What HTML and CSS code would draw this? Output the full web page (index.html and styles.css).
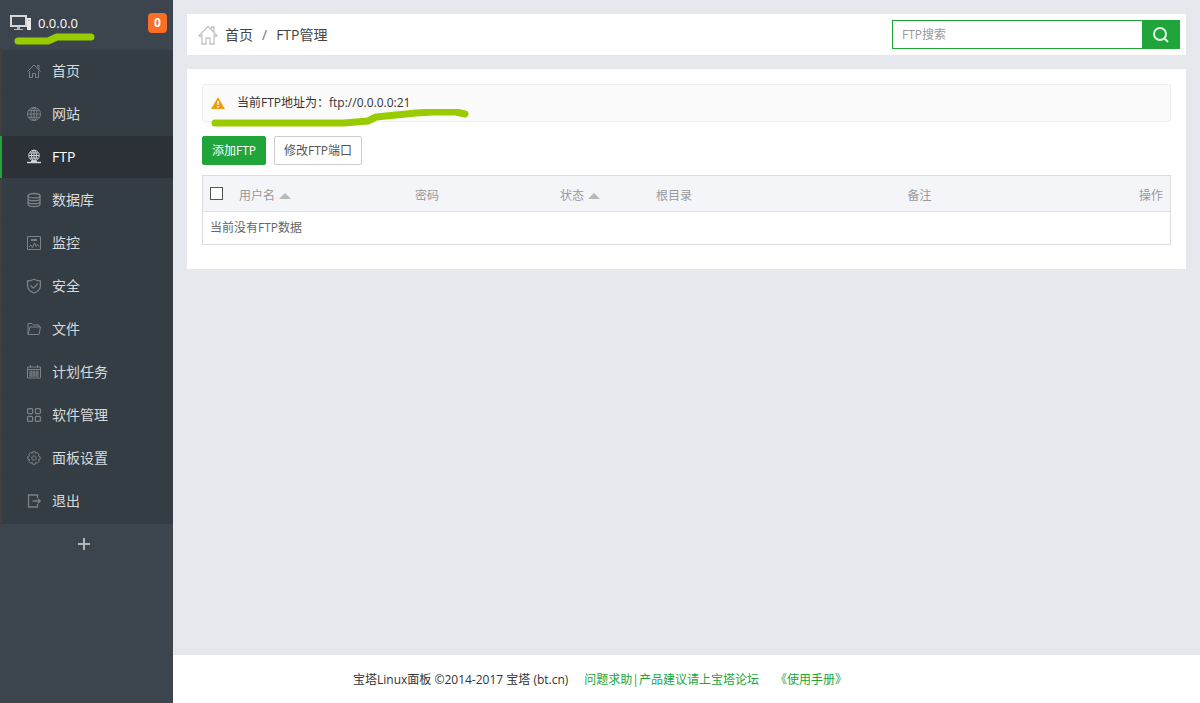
FILE: index.html
```
<!DOCTYPE html>
<html lang="zh-CN">
<head>
    <meta charset="UTF-8">
    <meta name="viewport" content="width=device-width, initial-scale=1.0">
    <title>FTP管理 - 宝塔Linux面板</title>
    <link rel="stylesheet" href="styles.css">
</head>
<body>
    <aside class="sidebar">
        <div class="server">
            <svg class="server-icon" width="22" height="16" viewBox="0 0 22 16">
                <path d="M1 1h15v10H1z" fill="none" stroke="#d4d6d8" stroke-width="2"/>
                <path d="M7 12h3v2h3v1H4v-1h3z" fill="#b4b7ba"/>
                <path d="M17 3h4v12h-4z" fill="#e8e9ea"/>
                <path d="M18 5h2v1h-2z" fill="#a0a4a8"/>
            </svg>
            <span class="server-ip">0.0.0.0</span>
            <span class="badge">0</span>
            <svg class="marker marker-ip" width="82" height="14" viewBox="0 0 82 14">
                <path d="M4 10H34L43 6H77"/>
            </svg>
        </div>
        <nav>
            <ul class="menu">
                <li><a href="#">
                    <svg viewBox="0 0 14 14"><path d="M.5 7.5 7 1l6.500 6.500M10.500 3V1.500h1.500v4M2.500 7v6.500h3v-4h3v4h3V7"/></svg>首页</a></li>
                <li><a href="#">
                    <svg viewBox="0 0 14 14"><circle cx="7" cy="7" r="6.500"/><ellipse cx="7" cy="7" rx="3" ry="6.500"/><path d="M7 .5v13M.5 7h13M1.500 3.700h11M1.500 10.300h11"/></svg>网站</a></li>
                <li class="current"><a href="#">
                    <svg viewBox="0 0 14 14"><circle cx="7" cy="5.500" r="5.300"/><ellipse cx="7" cy="5.500" rx="2.500" ry="5.300"/><path d="M7 .5v10M2 5.500h10M3 3h8M3 8h8"/><path d="M0 12.500h14M4 11.500h6" stroke-width="1.500"/></svg>FTP</a></li>
                <li><a href="#">
                    <svg viewBox="0 0 14 14" class="bold"><ellipse cx="7" cy="2.700" rx="6" ry="2.200"/><path d="M1 2.700v8.600c0 3 12 3 12 0V2.700M1 5.500c0 3 12 3 12 0M1 8.500c0 3 12 3 12 0"/></svg>数据库</a></li>
                <li><a href="#">
                    <svg viewBox="0 0 14 14"><path d="M.5.500h13v13H.5zM4 3.500h6M4 4.500h6M2 11l2-2 1.500 2.500L7.500 7 9 10.500l1.500-2 1.500 2"/></svg>监控</a></li>
                <li><a href="#">
                    <svg viewBox="0 0 14 14" class="bold"><path d="M7 .3C5 1.500 3 2 .6 2v5c0 3.500 3.200 5.800 6.400 7 3.200-1.200 6.400-3.500 6.400-7V2C11 2 9 1.500 7 .3zM3.500 6.500l2.800 2.700 4.500-4.700"/></svg>安全</a></li>
                <li><a href="#">
                    <svg viewBox="0 0 14 14"><path d="M1 12V1.500h4L6.500 3H12v2M1 12.500 3 5h10.500l-1.500 7.500z"/></svg>文件</a></li>
                <li><a href="#">
                    <svg viewBox="0 0 14 14"><path d="M.5 2h13v11H.5zM.5 4.500h13M3.500 0v3M10.500 0v3M2 7h10M2 9h10M2 11h10M4 5.500v6M7 5.500v6M10 5.500v6"/></svg>计划任务</a></li>
                <li><a href="#">
                    <svg viewBox="0 0 14 14" class="bold"><rect x=".6" y=".6" width="5" height="5" rx="1"/><rect x="8.400" y=".6" width="5" height="5" rx="1"/><rect x=".6" y="8.400" width="5" height="5" rx="1"/><rect x="8.400" y="8.400" width="5" height="5" rx="1"/></svg>软件管理</a></li>
                <li><a href="#">
                    <svg viewBox="0 0 14 14"><circle cx="7" cy="7" r="2.200"/><path d="M5.800.7h2.400l.5 1.700 1.500-.9 1.900 1.900-.9 1.500 1.900.7v2.600l-1.900.6.9 1.600-1.900 1.900-1.500-.9-.5 1.900H5.800l-.5-1.900-1.600.9-1.900-1.900.9-1.600-1.900-.6V5.600l1.900-.7-.9-1.500 1.900-1.900 1.600.9z"/></svg>面板设置</a></li>
                <li><a href="#">
                    <svg viewBox="0 0 14 14" class="bold"><path d="M10.500 4V1H1.500v12h9v-3M5.500 7H13M10.800 4.800 13.200 7l-2.400 2.200"/></svg>退出</a></li>
            </ul>
        </nav>
        <button class="add-menu" type="button" aria-label="添加菜单">
            <svg width="12" height="12" viewBox="0 0 12 12"><path d="M6 0v12M0 6h12"/></svg>
        </button>
    </aside>

    <div class="page">
        <main class="main">
            <div class="topbar">
                <nav class="crumbs">
                    <svg width="20" height="20" viewBox="0 0 20 20">
                        <path d="M1 10.500 10 1.500l9 9-1 1.200-2-1.700v9h-4v-6H8v6H4v-9l-2 1.700zM13.500 4V2H16v5"/>
                    </svg>
                    <a href="#">首页</a>
                    <span class="slash">/</span>
                    <span>FTP管理</span>
                </nav>
                <form class="search">
                    <input type="text" name="search" placeholder="FTP搜索" aria-label="FTP搜索">
                    <button type="submit" aria-label="搜索">
                        <svg width="16" height="16" viewBox="0 0 16 16"><circle cx="7" cy="7" r="6"/><path d="M11 11l4 4"/></svg>
                    </button>
                </form>
            </div>

            <section class="panel">
                <div class="notice">
                    <svg width="14" height="12" viewBox="0 0 14 12">
                        <path d="M7 0l7 12H0z" fill="#f39c12"/>
                        <path d="M6 4h2l-.4 4H6.400zM6.200 9h1.600v1.500H6.200z" fill="#fff"/>
                    </svg>
                    <span>当前FTP地址为：</span>
                    <span>ftp://0.0.0.0:21</span>
                    <svg class="marker marker-address" width="260" height="20" viewBox="0 0 260 20">
                        <path d="M5 14H134L158 12L166 8L206 4L224 3H246L255 5"/>
                    </svg>
                </div>

                <div class="actions">
                    <button class="btn btn-success" type="button">添加FTP</button>
                    <button class="btn" type="button">修改FTP端口</button>
                </div>

                <table class="ftp-table">
                    <colgroup>
                        <col class="col-check">
                        <col class="col-user">
                        <col class="col-password">
                        <col class="col-status">
                        <col class="col-path">
                        <col>
                        <col class="col-action">
                    </colgroup>
                    <thead>
                        <tr>
                            <th class="check"><input type="checkbox" aria-label="全选"></th>
                            <th>用户名<span class="sort"></span></th>
                            <th>密码</th>
                            <th>状态<span class="sort"></span></th>
                            <th>根目录</th>
                            <th>备注</th>
                            <th class="action">操作</th>
                        </tr>
                    </thead>
                    <tbody>
                        <tr>
                            <td colspan="7">当前没有FTP数据</td>
                        </tr>
                    </tbody>
                </table>
            </section>
        </main>

        <footer class="footer">
            <span>宝塔Linux面板 ©2014-2017 宝塔 (bt.cn)</span>
            <a href="#">问题求助|产品建议请上宝塔论坛</a>
            <a href="#">《使用手册》</a>
        </footer>
    </div>
</body>
</html>
```

FILE: styles.css
```
* {
    box-sizing: border-box;
}
body {
    margin: 0;
    min-height: 100vh;
    display: flex;
    font-family: "Open Sans", "Noto Sans CJK SC", sans-serif;
    font-size: 12px;
    line-height: 18px;
    color: #333;
    background: #e5e8ed;
}
a {
    color: inherit;
    text-decoration: none;
}
button, input {
    font: inherit;
}

/* sidebar */
.sidebar {
    width: 173px;
    flex: none;
    background: #3c444d;
}
.server {
    position: relative;
    display: flex;
    align-items: center;
    height: 50px;
    padding: 0 6px 4px 10px;
    color: #fff;
}
.server-ip {
    margin-left: 6px;
    font-size: 13px;
}
.badge {
    margin-left: auto;
    width: 19px;
    height: 20px;
    line-height: 20px;
    border-radius: 4px;
    background: #fc6d26;
    font-weight: bold;
    text-align: center;
}
.marker {
    position: absolute;
    pointer-events: none;
    fill: none;
    stroke: #9c0;
    stroke-width: 7;
    stroke-linecap: round;
    stroke-linejoin: round;
}
.marker-ip {
    left: 14px;
    top: 31px;
}
.marker-address {
    left: 7px;
    top: 24px;
}
.menu {
    margin: 0;
    padding: 0 0 1px;
    list-style: none;
    background: #353d44;
}
.menu li {
    border-bottom: 1px solid #353d44;
}
.menu a {
    display: flex;
    align-items: center;
    height: 42px;
    padding-left: 25px;
    border-left: 2px solid #433f3e;
    font-size: 14px;
    color: #d8dadc;
}
.menu svg {
    width: 14px;
    height: 14px;
    margin-right: 11px;
    overflow: visible;
    fill: none;
    stroke: #7c8186;
    stroke-width: 1;
}
.menu svg.bold {
    stroke-width: 1.3;
}
.menu .current a {
    border-left-color: #20a53a;
    background: #2c3138;
    color: #fff;
}
.menu .current svg {
    stroke: #d0d2d4;
}
.add-menu {
    display: flex;
    justify-content: center;
    align-items: center;
    width: 100%;
    height: 40px;
    padding: 0 5px 0 0;
    border: 0;
    background: none;
    cursor: pointer;
}
.add-menu svg {
    stroke: #b4b6b8;
    stroke-width: 2;
}

/* content */
.page {
    flex: 1;
    min-width: 0;
    display: flex;
    flex-direction: column;
}
.main {
    flex: 1;
    padding: 14px;
}
.topbar {
    display: flex;
    justify-content: space-between;
    align-items: center;
    height: 41px;
    padding: 0 6px 0 11px;
    background: #fff;
}
.crumbs {
    display: flex;
    align-items: center;
    font-size: 14px;
    color: #444;
}
.crumbs svg {
    margin-right: 7px;
    fill: none;
    stroke: #c4c4c4;
    stroke-width: 1.3;
}
.slash {
    margin: 0 9px;
    color: #777;
}
.search {
    display: flex;
    width: 288px;
    height: 29px;
}
.search input {
    flex: 1;
    min-width: 0;
    padding: 0 9px;
    border: 1px solid #20a53a;
    border-right: 0;
    background: #fff;
    outline: none;
}
.search input::placeholder {
    color: #999;
}
.search button {
    display: flex;
    justify-content: center;
    align-items: center;
    width: 38px;
    padding: 0;
    border: 0;
    background: #20a53a;
    cursor: pointer;
}
.search svg {
    fill: none;
    stroke: #e4f4e7;
    stroke-width: 2;
}
.panel {
    margin-top: 14px;
    padding: 15px 15px 24px;
    background: #fff;
}
.notice {
    position: relative;
    display: flex;
    align-items: center;
    height: 38px;
    padding: 0 8px;
    border: 1px solid #eee;
    border-radius: 3px;
    background: #fbfbfb;
}
.notice svg:first-child {
    margin-right: 12px;
}
.actions {
    display: flex;
    gap: 8px;
    margin: 14px 0 10px;
}
.btn {
    height: 29px;
    padding: 0 9px;
    border: 1px solid #ccc;
    border-radius: 2px;
    background: #fff;
    color: #555;
    cursor: pointer;
}
.btn-success {
    border-color: #20a53a;
    background: #20a53a;
    color: #fff;
}
.ftp-table {
    width: 100%;
    table-layout: fixed;
    border: 1px solid #ddd;
    border-spacing: 0;
}
.ftp-table th {
    height: 36px;
    padding: 4px 7px 0;
    border-bottom: 1px solid #dfe2e5;
    background: #f4f5f9;
    color: #999;
    font-weight: normal;
    text-align: left;
    vertical-align: middle;
}
.ftp-table .check {
    padding-top: 0;
}
.ftp-table .action {
    text-align: right;
}
.ftp-table td {
    height: 32px;
    padding: 0 7px;
    color: #666;
}
.ftp-table input {
    display: block;
    appearance: none;
    width: 13px;
    height: 13px;
    margin: 0;
    border: 1px solid #555;
    background: #fff;
}
.col-check {
    width: 29px;
}
.col-user {
    width: 176px;
}
.col-password {
    width: 145px;
}
.col-status {
    width: 96px;
}
.col-path {
    width: 26%;
}
.col-action {
    width: 120px;
}
.sort {
    display: inline-block;
    margin-left: 4px;
    border: 6px solid transparent;
    border-top: 0;
    border-bottom-color: #b8b8b8;
    vertical-align: middle;
}

/* footer text is centred on the whole window, sidebar included */
.footer {
    display: flex;
    justify-content: center;
    align-items: center;
    gap: 16px;
    height: 48px;
    padding: 2px 173px 0 0;
    background: #fff;
}
.footer a {
    color: #20a53a;
}
```
